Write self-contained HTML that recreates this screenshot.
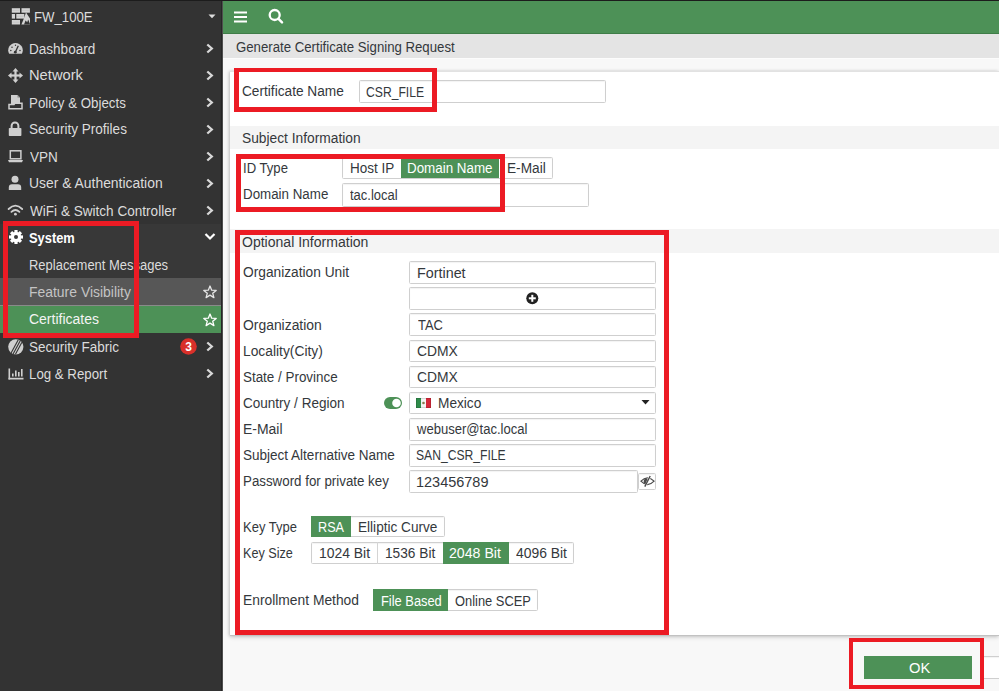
<!DOCTYPE html>
<html><head><meta charset="utf-8"><style>
html,body{margin:0;padding:0;width:999px;height:691px;overflow:hidden;background:#f8f8f8}
.tx{position:absolute;white-space:nowrap;font-family:"Liberation Sans",sans-serif;transform-origin:0 0}
svg{overflow:visible}
</style></head><body>
<div style="position:absolute;left:0px;top:0px;width:999px;height:691px;background:#f8f8f8"></div><div style="position:absolute;left:0px;top:0px;width:999px;height:1px;background:#1c1c1c"></div><div style="position:absolute;left:0px;top:1px;width:221px;height:690px;background:#333333"></div><div style="position:absolute;left:221px;top:1px;width:1px;height:690px;background:#262626"></div><div style="position:absolute;left:222px;top:1px;width:1px;height:690px;background:#4e4e4e"></div><div style="position:absolute;left:223px;top:1px;width:776px;height:32px;background:#4d9157"></div><div style="position:absolute;left:223px;top:33px;width:776px;height:1px;background:#3f7d48"></div><div style="position:absolute;left:223px;top:34px;width:776px;height:24px;background:#e4e4e4"></div><div style="position:absolute;left:223px;top:58px;width:776px;height:13px;background:#f8f8f8"></div><div style="position:absolute;left:223px;top:58px;width:776px;height:1px;background:#fcfcfc"></div><div style="position:absolute;left:230px;top:71px;width:769px;height:565px;background:#fff;border-bottom:1px solid #c2c2c2;border-top:1px solid #e2e2e2;box-sizing:border-box;box-shadow:0 2px 4px rgba(0,0,0,.10),-1px 0 3px rgba(0,0,0,.18)"></div><div style="position:absolute;left:230px;top:126px;width:769px;height:23px;background:#f4f4f4"></div><div style="position:absolute;left:230px;top:229px;width:769px;height:24px;background:#f4f4f4"></div><div style="position:absolute;left:0px;top:224px;width:221px;height:81px;background:#383838"></div><div style="position:absolute;left:0px;top:278px;width:221px;height:27px;background:#575757"></div><div style="position:absolute;left:0px;top:305px;width:221px;height:1px;background:#8a8a8a"></div><div style="position:absolute;left:0px;top:306px;width:221px;height:27px;background:#4d9157"></div><div style="position:absolute;left:359px;top:80px;width:247px;height:23px;background:#fff;border:1px solid #cfcfcf;border-radius:1.5px;box-shadow:inset 0 1px 1px rgba(0,0,0,.05);box-sizing:border-box"></div><div style="position:absolute;left:342px;top:157px;width:211px;height:22px;background:#fff;border:1px solid #cfcfcf;border-radius:1.5px;box-shadow:inset 0 1px 1px rgba(0,0,0,.05);box-sizing:border-box"></div><div style="position:absolute;left:401px;top:158px;width:98px;height:20px;background:#4d9157"></div><div style="position:absolute;left:342px;top:183px;width:247px;height:24px;background:#fff;border:1px solid #cfcfcf;border-radius:1.5px;box-shadow:inset 0 1px 1px rgba(0,0,0,.05);box-sizing:border-box"></div><div style="position:absolute;left:409px;top:261px;width:247px;height:23px;background:#fff;border:1px solid #cfcfcf;border-radius:1.5px;box-shadow:inset 0 1px 1px rgba(0,0,0,.05);box-sizing:border-box"></div><div style="position:absolute;left:409px;top:287px;width:247px;height:23px;background:#fff;border:1px solid #cfcfcf;border-radius:1.5px;box-shadow:inset 0 1px 1px rgba(0,0,0,.05);box-sizing:border-box"></div><div style="position:absolute;left:409px;top:313px;width:247px;height:23px;background:#fff;border:1px solid #cfcfcf;border-radius:1.5px;box-shadow:inset 0 1px 1px rgba(0,0,0,.05);box-sizing:border-box"></div><div style="position:absolute;left:409px;top:340px;width:247px;height:22px;background:#fff;border:1px solid #cfcfcf;border-radius:1.5px;box-shadow:inset 0 1px 1px rgba(0,0,0,.05);box-sizing:border-box"></div><div style="position:absolute;left:409px;top:366px;width:247px;height:22px;background:#fff;border:1px solid #cfcfcf;border-radius:1.5px;box-shadow:inset 0 1px 1px rgba(0,0,0,.05);box-sizing:border-box"></div><div style="position:absolute;left:409px;top:392px;width:247px;height:22px;background:#fff;border:1px solid #cfcfcf;border-radius:1.5px;box-shadow:inset 0 1px 1px rgba(0,0,0,.05);box-sizing:border-box"></div><div style="position:absolute;left:409px;top:418px;width:247px;height:23px;background:#fff;border:1px solid #cfcfcf;border-radius:1.5px;box-shadow:inset 0 1px 1px rgba(0,0,0,.05);box-sizing:border-box"></div><div style="position:absolute;left:409px;top:444px;width:247px;height:23px;background:#fff;border:1px solid #cfcfcf;border-radius:1.5px;box-shadow:inset 0 1px 1px rgba(0,0,0,.05);box-sizing:border-box"></div><div style="position:absolute;left:409px;top:470px;width:228.5px;height:23px;background:#fff;border:1px solid #cfcfcf;border-radius:1.5px;box-shadow:inset 0 1px 1px rgba(0,0,0,.05);box-sizing:border-box"></div><div style="position:absolute;left:637.5px;top:473px;width:18.5px;height:17px;background:#fff;border:1px solid #cfcfcf;border-radius:1.5px;box-shadow:inset 0 1px 1px rgba(0,0,0,.05);box-sizing:border-box"></div><div style="position:absolute;left:311px;top:516px;width:134px;height:21px;background:#fff;border:1px solid #cfcfcf;border-radius:1.5px;box-shadow:inset 0 1px 1px rgba(0,0,0,.05);box-sizing:border-box"></div><div style="position:absolute;left:311px;top:516px;width:40px;height:21px;background:#4d9157"></div><div style="position:absolute;left:311px;top:542px;width:263px;height:22px;background:#fff;border:1px solid #cfcfcf;border-radius:1.5px;box-shadow:inset 0 1px 1px rgba(0,0,0,.05);box-sizing:border-box"></div><div style="position:absolute;left:377px;top:542px;width:1px;height:22px;background:#d4d4d4"></div><div style="position:absolute;left:443px;top:542px;width:66px;height:22px;background:#4d9157"></div><div style="position:absolute;left:373px;top:589px;width:165px;height:22px;background:#fff;border:1px solid #cfcfcf;border-radius:1.5px;box-shadow:inset 0 1px 1px rgba(0,0,0,.05);box-sizing:border-box"></div><div style="position:absolute;left:373px;top:589px;width:75px;height:22px;background:#4d9157"></div><div style="position:absolute;left:864px;top:656px;width:108px;height:23px;background:#4d9157"></div><div style="position:absolute;left:981px;top:656px;width:29px;height:23px;background:#fff;border:1px solid #cfcfcf;border-radius:1.5px;box-shadow:inset 0 1px 1px rgba(0,0,0,.05);box-sizing:border-box"></div>
<svg style="position:absolute;left:234px;top:10.5px" width="13" height="12" viewBox="0 0 13 12"><rect x="0" y="0.5" width="13" height="2" fill="#fff"/><rect x="0" y="5" width="13" height="2" fill="#fff"/><rect x="0" y="9.5" width="13" height="2" fill="#fff"/></svg><svg style="position:absolute;left:266px;top:7px" width="19" height="19" viewBox="0 0 19 19"><circle cx="8.7" cy="8" r="5" fill="none" stroke="#fff" stroke-width="2.3"/><line x1="12.3" y1="11.6" x2="16" y2="15.3" stroke="#fff" stroke-width="2.5" stroke-linecap="round"/></svg><svg style="position:absolute;left:207px;top:13px" width="10" height="7" viewBox="0 0 10 7"><path d="M1.5 1.5 L8.5 1.5 L5 5.3 Z" fill="#ddd"/></svg><svg style="position:absolute;left:11px;top:7px" width="21" height="19" viewBox="0 0 21 19"><g fill="#d2d2d2"><rect x="0.8" y="1.2" width="8.2" height="4.5"/><rect x="10.5" y="1.2" width="8.4" height="4.5"/><rect x="0.8" y="7" width="3.2" height="4.6"/><rect x="5.3" y="7" width="8" height="4.6"/><rect x="0.8" y="13" width="8.2" height="4.5"/></g><g stroke="#b8b8b8" stroke-width="0.5"><line x1="1.5" y1="3.4" x2="8.4" y2="3.4"/><line x1="11.2" y1="3.4" x2="18.2" y2="3.4"/><line x1="6" y1="9.3" x2="12.6" y2="9.3"/><line x1="1.5" y1="15.2" x2="8.4" y2="15.2"/></g><path d="M10.4 17.6 L12.2 13.2 L15 5.6 L17 8.6 L19 11.6 L19 17.6 Z" fill="#d2d2d2"/><path d="M13 17.6 L14.6 13.5 L16.2 15.2 L17.2 12.6 L19.2 17.6 Z" fill="#333"/></svg><svg style="position:absolute;left:8px;top:43px" width="15" height="11" viewBox="0 0 15 11"><path d="M1.1 10.8 A7.3 7.3 0 1 1 13.9 10.8 Z" fill="#cfcfcf"/><path d="M7.3 9.3 L10.3 2.8" stroke="#333" stroke-width="1.3"/><circle cx="7.3" cy="9.2" r="1.4" fill="#333"/><circle cx="2.8" cy="7.6" r="0.75" fill="#333"/><circle cx="4" cy="4.2" r="0.75" fill="#333"/><circle cx="7.5" cy="2.3" r="0.7" fill="#333"/><circle cx="12" cy="7.6" r="0.75" fill="#333"/></svg><svg style="position:absolute;left:8px;top:68px" width="15" height="15" viewBox="0 0 15 15"><g fill="#cfcfcf"><path d="M7.5 0 L10.5 3.5 L4.5 3.5Z"/><path d="M7.5 15 L10.5 11.5 L4.5 11.5Z"/><path d="M0 7.5 L3.5 4.5 L3.5 10.5Z"/><path d="M15 7.5 L11.5 4.5 L11.5 10.5Z"/><rect x="6.4" y="3" width="2.2" height="9"/><rect x="3" y="6.4" width="9" height="2.2"/></g></svg><svg style="position:absolute;left:8px;top:95px" width="15" height="15" viewBox="0 0 15 15"><path d="M3 0 L9.5 0 L12 2.5 L12 9 L3 9 Z" fill="#cfcfcf"/><path d="M9.5 0 L9.5 2.5 L12 2.5" fill="#888"/><path d="M1 13.8 L1 9.5 L6 9.5 L6.8 8.3 L14 8.3 L14 13.8 Z" fill="none" stroke="#cfcfcf" stroke-width="1.5"/></svg><svg style="position:absolute;left:8px;top:121px" width="14" height="16" viewBox="0 0 14 16"><path d="M3.6 7 L3.6 4.8 A3.4 3.4 0 0 1 10.4 4.8 L10.4 7" fill="none" stroke="#cfcfcf" stroke-width="2"/><rect x="0.8" y="7" width="12.6" height="8" rx="0.8" fill="#cfcfcf"/></svg><svg style="position:absolute;left:8px;top:150px" width="15" height="13" viewBox="0 0 15 13"><rect x="2.3" y="0.8" width="10.6" height="8" fill="none" stroke="#cfcfcf" stroke-width="1.5"/><path d="M0 10 L15 10 L14 12.2 L1 12.2 Z" fill="#cfcfcf"/></svg><svg style="position:absolute;left:8px;top:175px" width="14" height="16" viewBox="0 0 14 16"><circle cx="7" cy="4.3" r="3.5" fill="#cfcfcf"/><path d="M0.8 15 L0.8 12.5 Q0.8 9.3 4 9.3 L10 9.3 Q13.2 9.3 13.2 12.5 L13.2 15 Z" fill="#cfcfcf"/></svg><svg style="position:absolute;left:7px;top:204px" width="17" height="12" viewBox="0 0 17 12"><g fill="none" stroke="#cfcfcf" stroke-width="1.8" stroke-linecap="round"><path d="M1.6 5 Q8.4 -1.8 15.2 5"/><path d="M4.4 7.9 Q8.4 4 12.4 7.9"/></g><circle cx="8.4" cy="10.2" r="1.4" fill="#cfcfcf"/></svg><svg style="position:absolute;left:8.5px;top:230px" width="14" height="14" viewBox="0 0 14 14"><g transform="translate(7,7)" fill="#fff"><rect x="-1.6" y="-7" width="3.2" height="3.2" transform="rotate(0)"/><rect x="-1.6" y="-7" width="3.2" height="3.2" transform="rotate(45)"/><rect x="-1.6" y="-7" width="3.2" height="3.2" transform="rotate(90)"/><rect x="-1.6" y="-7" width="3.2" height="3.2" transform="rotate(135)"/><rect x="-1.6" y="-7" width="3.2" height="3.2" transform="rotate(180)"/><rect x="-1.6" y="-7" width="3.2" height="3.2" transform="rotate(225)"/><rect x="-1.6" y="-7" width="3.2" height="3.2" transform="rotate(270)"/><rect x="-1.6" y="-7" width="3.2" height="3.2" transform="rotate(315)"/><circle r="5.2"/><circle r="2" fill="#383838"/></g></svg><svg style="position:absolute;left:205px;top:43.0px" width="10" height="11" viewBox="0 0 10 11"><path d="M2.3 1.5 L6.8 5.5 L2.3 9.5" fill="none" stroke="#d8d8d8" stroke-width="2.3"/></svg><svg style="position:absolute;left:205px;top:70.0px" width="10" height="11" viewBox="0 0 10 11"><path d="M2.3 1.5 L6.8 5.5 L2.3 9.5" fill="none" stroke="#d8d8d8" stroke-width="2.3"/></svg><svg style="position:absolute;left:205px;top:97.0px" width="10" height="11" viewBox="0 0 10 11"><path d="M2.3 1.5 L6.8 5.5 L2.3 9.5" fill="none" stroke="#d8d8d8" stroke-width="2.3"/></svg><svg style="position:absolute;left:205px;top:124.0px" width="10" height="11" viewBox="0 0 10 11"><path d="M2.3 1.5 L6.8 5.5 L2.3 9.5" fill="none" stroke="#d8d8d8" stroke-width="2.3"/></svg><svg style="position:absolute;left:205px;top:151.0px" width="10" height="11" viewBox="0 0 10 11"><path d="M2.3 1.5 L6.8 5.5 L2.3 9.5" fill="none" stroke="#d8d8d8" stroke-width="2.3"/></svg><svg style="position:absolute;left:205px;top:178.0px" width="10" height="11" viewBox="0 0 10 11"><path d="M2.3 1.5 L6.8 5.5 L2.3 9.5" fill="none" stroke="#d8d8d8" stroke-width="2.3"/></svg><svg style="position:absolute;left:205px;top:205.0px" width="10" height="11" viewBox="0 0 10 11"><path d="M2.3 1.5 L6.8 5.5 L2.3 9.5" fill="none" stroke="#d8d8d8" stroke-width="2.3"/></svg><svg style="position:absolute;left:205px;top:341.0px" width="10" height="11" viewBox="0 0 10 11"><path d="M2.3 1.5 L6.8 5.5 L2.3 9.5" fill="none" stroke="#d8d8d8" stroke-width="2.3"/></svg><svg style="position:absolute;left:205px;top:368.0px" width="10" height="11" viewBox="0 0 10 11"><path d="M2.3 1.5 L6.8 5.5 L2.3 9.5" fill="none" stroke="#d8d8d8" stroke-width="2.3"/></svg><svg style="position:absolute;left:204px;top:231px" width="12" height="10" viewBox="0 0 12 10"><path d="M1.5 3 L6 7.5 L10.5 3" fill="none" stroke="#fff" stroke-width="2.2"/></svg><svg style="position:absolute;left:203px;top:284.5px" width="14" height="14" viewBox="0 0 14 14"><path d="M7 1 L8.7 5.2 L13.2 5.4 L9.7 8.2 L10.9 12.6 L7 10.1 L3.1 12.6 L4.3 8.2 L0.8 5.4 L5.3 5.2 Z" fill="none" stroke="#e6e6e6" stroke-width="1.3" stroke-linejoin="round"/></svg><svg style="position:absolute;left:203px;top:312.5px" width="14" height="14" viewBox="0 0 14 14"><path d="M7 1 L8.7 5.2 L13.2 5.4 L9.7 8.2 L10.9 12.6 L7 10.1 L3.1 12.6 L4.3 8.2 L0.8 5.4 L5.3 5.2 Z" fill="none" stroke="#fff" stroke-width="1.3" stroke-linejoin="round"/></svg><svg style="position:absolute;left:7.5px;top:338.5px" width="16" height="16" viewBox="0 0 16 16"><defs><clipPath id="cf"><circle cx="7.8" cy="7.8" r="7.6"/></clipPath></defs><circle cx="7.8" cy="7.8" r="7.6" fill="#cfcfcf"/><g clip-path="url(#cf)" stroke="#333" stroke-width="1.1"><line x1="1.5" y1="17" x2="11.5" y2="-1.5"/><line x1="4" y1="17" x2="14" y2="-1.5"/><line x1="6.5" y1="17" x2="16.5" y2="-1.5"/></g></svg><svg style="position:absolute;left:180px;top:338px" width="17" height="17" viewBox="0 0 17 17"><circle cx="8.5" cy="8.5" r="8.3" fill="#d9302a"/><text x="8.5" y="12.6" text-anchor="middle" font-family="Liberation Sans" font-size="12" font-weight="bold" fill="#fff">3</text></svg><svg style="position:absolute;left:7.5px;top:367.5px" width="16" height="12" viewBox="0 0 16 12"><g fill="#cfcfcf"><rect x="0.5" y="0.5" width="1.6" height="11"/><rect x="0.5" y="9.8" width="15" height="1.7"/><rect x="4" y="5.5" width="1.6" height="3"/><rect x="7" y="2.5" width="1.6" height="6"/><rect x="10" y="4" width="1.6" height="4.5"/><rect x="13" y="1" width="1.6" height="7.5"/></g></svg><svg style="position:absolute;left:526.1px;top:292px" width="13" height="13" viewBox="0 0 13 13"><circle cx="6.3" cy="6.3" r="6" fill="#222"/><rect x="5.3" y="2.8" width="2" height="7" fill="#fff"/><rect x="2.8" y="5.3" width="7" height="2" fill="#fff"/></svg><svg style="position:absolute;left:384px;top:397px" width="18" height="12" viewBox="0 0 18 12"><rect x="0" y="0" width="18" height="12" rx="6" fill="#4d9157"/><circle cx="12.5" cy="6" r="4.3" fill="#fff"/></svg><svg style="position:absolute;left:416px;top:398px" width="15" height="10" viewBox="0 0 15 10"><rect x="0" y="0" width="5" height="10" fill="#2e8b4a"/><rect x="5" y="0" width="5" height="10" fill="#f4f4f4"/><rect x="10" y="0" width="5" height="10" fill="#d4283a"/><circle cx="7.5" cy="5" r="1.3" fill="#8a7a50"/><rect x="0.25" y="0.25" width="14.5" height="9.5" fill="none" stroke="rgba(0,0,0,.25)" stroke-width="0.5"/></svg><svg style="position:absolute;left:640px;top:399px" width="11" height="7" viewBox="0 0 11 7"><path d="M1.5 1 L9.5 1 L5.5 5.5 Z" fill="#222"/></svg><svg style="position:absolute;left:639.5px;top:475.5px" width="15" height="11" viewBox="0 0 15 11"><defs><clipPath id="ce"><path d="M-1 -1 L9.2 -1 L3.7 12 L-1 12 Z"/></clipPath></defs><path d="M0.9 5.2 Q7.5 -1.6 14.1 5.2 Q7.5 12 0.9 5.2 Z" fill="none" stroke="#4a4a4a" stroke-width="1.2"/><line x1="4.6" y1="11.2" x2="10.4" y2="-0.6" stroke="#fff" stroke-width="2.4"/><circle cx="6.6" cy="5.4" r="2.9" fill="#4a4a4a" clip-path="url(#ce)"/><line x1="4.8" y1="10.6" x2="10.2" y2="0" stroke="#4a4a4a" stroke-width="1.4"/></svg>
<div class="tx" style="left:33.56px;top:10px;font-size:14px;line-height:14px;color:#dcdcdc;font-weight:400;transform:scaleX(0.9426)">FW_100E</div><div class="tx" style="left:29.03px;top:42px;font-size:14px;line-height:14px;color:#dcdcdc;font-weight:400;transform:scaleX(0.9672)">Dashboard</div><div class="tx" style="left:28.95px;top:68px;font-size:14px;line-height:14px;color:#dcdcdc;font-weight:400;transform:scaleX(1.0500)">Network</div><div class="tx" style="left:29.05px;top:96px;font-size:14px;line-height:14px;color:#dcdcdc;font-weight:400;transform:scaleX(0.9505)">Policy &amp; Objects</div><div class="tx" style="left:29.03px;top:122px;font-size:14px;line-height:14px;color:#dcdcdc;font-weight:400;transform:scaleX(0.9680)">Security Profiles</div><div class="tx" style="left:30.00px;top:150px;font-size:14px;line-height:14px;color:#dcdcdc;font-weight:400;transform:scaleX(0.9679)">VPN</div><div class="tx" style="left:29.01px;top:176px;font-size:14px;line-height:14px;color:#dcdcdc;font-weight:400;transform:scaleX(0.9925)">User &amp; Authentication</div><div class="tx" style="left:30.00px;top:204px;font-size:14px;line-height:14px;color:#dcdcdc;font-weight:400;transform:scaleX(0.9689)">WiFi &amp; Switch Controller</div><div class="tx" style="left:28.88px;top:231px;font-size:14px;line-height:14px;color:#ffffff;font-weight:700;transform:scaleX(0.9188)">System</div><div class="tx" style="left:28.87px;top:258px;font-size:14px;line-height:14px;color:#dcdcdc;font-weight:400;transform:scaleX(0.9262)">Replacement Messages</div><div class="tx" style="left:28.80px;top:285px;font-size:14px;line-height:14px;color:#c4c4c4;font-weight:400;transform:scaleX(0.9950)">Feature Visibility</div><div class="tx" style="left:28.80px;top:312px;font-size:14px;line-height:14px;color:#f4f4f4;font-weight:400;transform:scaleX(0.9986)">Certificates</div><div class="tx" style="left:28.84px;top:340px;font-size:14px;line-height:14px;color:#dcdcdc;font-weight:400;transform:scaleX(0.9641)">Security Fabric</div><div class="tx" style="left:28.85px;top:367px;font-size:14px;line-height:14px;color:#dcdcdc;font-weight:400;transform:scaleX(0.9481)">Log &amp; Report</div><div class="tx" style="left:235.56px;top:40px;font-size:14px;line-height:14px;color:#34383c;font-weight:400;transform:scaleX(0.9429)">Generate Certificate Signing Request</div><div class="tx" style="left:242.22px;top:84px;font-size:14px;line-height:14px;color:#34383c;font-weight:400;transform:scaleX(0.9767)">Certificate Name</div><div class="tx" style="left:365.73px;top:85px;font-size:14px;line-height:14px;color:#34383c;font-weight:400;transform:scaleX(0.8677)">CSR_FILE</div><div class="tx" style="left:242.22px;top:131px;font-size:14px;line-height:14px;color:#34383c;font-weight:400;transform:scaleX(0.9840)">Subject Information</div><div class="tx" style="left:242.86px;top:161px;font-size:14px;line-height:14px;color:#34383c;font-weight:400;transform:scaleX(0.9362)">ID Type</div><div class="tx" style="left:242.55px;top:187px;font-size:14px;line-height:14px;color:#34383c;font-weight:400;transform:scaleX(0.9534)">Domain Name</div><div class="tx" style="left:349.54px;top:161px;font-size:14px;line-height:14px;color:#34383c;font-weight:400;transform:scaleX(0.9636)">Host IP</div><div class="tx" style="left:407.04px;top:161px;font-size:14px;line-height:14px;color:#ffffff;font-weight:400;transform:scaleX(0.9557)">Domain Name</div><div class="tx" style="left:506.52px;top:161px;font-size:14px;line-height:14px;color:#34383c;font-weight:400;transform:scaleX(0.9763)">E-Mail</div><div class="tx" style="left:350.20px;top:188px;font-size:14px;line-height:14px;color:#34383c;font-weight:400;transform:scaleX(0.9275)">tac.local</div><div class="tx" style="left:242.40px;top:235px;font-size:14px;line-height:14px;color:#34383c;font-weight:400;transform:scaleX(1.0024)">Optional Information</div><div class="tx" style="left:242.62px;top:265px;font-size:14px;line-height:14px;color:#34383c;font-weight:400;transform:scaleX(0.9804)">Organization Unit</div><div class="tx" style="left:242.61px;top:318px;font-size:14px;line-height:14px;color:#34383c;font-weight:400;transform:scaleX(0.9922)">Organization</div><div class="tx" style="left:242.61px;top:344px;font-size:14px;line-height:14px;color:#34383c;font-weight:400;transform:scaleX(0.9861)">Locality(City)</div><div class="tx" style="left:242.64px;top:370px;font-size:14px;line-height:14px;color:#34383c;font-weight:400;transform:scaleX(0.9577)">State / Province</div><div class="tx" style="left:242.63px;top:396px;font-size:14px;line-height:14px;color:#34383c;font-weight:400;transform:scaleX(0.9660)">Country / Region</div><div class="tx" style="left:242.60px;top:422px;font-size:14px;line-height:14px;color:#34383c;font-weight:400;transform:scaleX(0.9974)">E-Mail</div><div class="tx" style="left:242.63px;top:448px;font-size:14px;line-height:14px;color:#34383c;font-weight:400;transform:scaleX(0.9654)">Subject Alternative Name</div><div class="tx" style="left:242.65px;top:474px;font-size:14px;line-height:14px;color:#34383c;font-weight:400;transform:scaleX(0.9513)">Password for private key</div><div class="tx" style="left:416.58px;top:266px;font-size:14px;line-height:14px;color:#34383c;font-weight:400;transform:scaleX(1.0239)">Fortinet</div><div class="tx" style="left:417.60px;top:318px;font-size:14px;line-height:14px;color:#34383c;font-weight:400;transform:scaleX(0.9231)">TAC</div><div class="tx" style="left:416.61px;top:344px;font-size:14px;line-height:14px;color:#34383c;font-weight:400;transform:scaleX(0.9900)">CDMX</div><div class="tx" style="left:416.61px;top:370px;font-size:14px;line-height:14px;color:#34383c;font-weight:400;transform:scaleX(0.9900)">CDMX</div><div class="tx" style="left:438.22px;top:396px;font-size:14px;line-height:14px;color:#34383c;font-weight:400;transform:scaleX(0.9767)">Mexico</div><div class="tx" style="left:416.90px;top:422px;font-size:14px;line-height:14px;color:#34383c;font-weight:400;transform:scaleX(0.9322)">webuser@tac.local</div><div class="tx" style="left:416.03px;top:448px;font-size:14px;line-height:14px;color:#34383c;font-weight:400;transform:scaleX(0.8667)">SAN_CSR_FILE</div><div class="tx" style="left:415.87px;top:475px;font-size:14px;line-height:14px;color:#34383c;font-weight:400;transform:scaleX(1.0338)">123456789</div><div class="tx" style="left:242.77px;top:520px;font-size:14px;line-height:14px;color:#34383c;font-weight:400;transform:scaleX(0.9281)">Key Type</div><div class="tx" style="left:242.80px;top:546px;font-size:14px;line-height:14px;color:#34383c;font-weight:400;transform:scaleX(0.9019)">Key Size</div><div class="tx" style="left:242.71px;top:593px;font-size:14px;line-height:14px;color:#34383c;font-weight:400;transform:scaleX(0.9871)">Enrollment Method</div><div class="tx" style="left:318.30px;top:520px;font-size:14px;line-height:14px;color:#ffffff;font-weight:400;transform:scaleX(0.9036)">RSA</div><div class="tx" style="left:358.33px;top:520px;font-size:14px;line-height:14px;color:#34383c;font-weight:400;transform:scaleX(0.9712)">Elliptic Curve</div><div class="tx" style="left:319.01px;top:546px;font-size:14px;line-height:14px;color:#34383c;font-weight:400;transform:scaleX(0.9940)">1024 Bit</div><div class="tx" style="left:384.72px;top:546px;font-size:14px;line-height:14px;color:#34383c;font-weight:400;transform:scaleX(0.9780)">1536 Bit</div><div class="tx" style="left:449.39px;top:546px;font-size:14px;line-height:14px;color:#ffffff;font-weight:400;transform:scaleX(1.0100)">2048 Bit</div><div class="tx" style="left:516.00px;top:546px;font-size:14px;line-height:14px;color:#34383c;font-weight:400;transform:scaleX(0.9922)">4096 Bit</div><div class="tx" style="left:380.88px;top:594px;font-size:14px;line-height:14px;color:#ffffff;font-weight:400;transform:scaleX(0.9188)">File Based</div><div class="tx" style="left:455.08px;top:594px;font-size:14px;line-height:14px;color:#34383c;font-weight:400;transform:scaleX(0.9198)">Online SCEP</div><div class="tx" style="left:908.95px;top:661px;font-size:14px;line-height:14px;color:#ffffff;font-weight:400;transform:scaleX(1.0526)">OK</div>
<div style="position:absolute;left:234px;top:68px;width:203px;height:44px;border-style:solid;border-width:4px 5px 5px 5px;border-color:#ec1b24;box-sizing:border-box"></div><div style="position:absolute;left:236px;top:154px;width:269px;height:58px;border-style:solid;border-width:5px;border-color:#ec1b24;box-sizing:border-box"></div><div style="position:absolute;left:235px;top:230px;width:434px;height:405px;border-style:solid;border-width:5px;border-color:#ec1b24;box-sizing:border-box"></div><div style="position:absolute;left:3px;top:221px;width:136px;height:117px;border-style:solid;border-width:5px;border-color:#ec1b24;box-sizing:border-box"></div><div style="position:absolute;left:849px;top:638px;width:135px;height:51px;border-style:solid;border-width:4px;border-color:#ec1b24;box-sizing:border-box"></div>
</body></html>
